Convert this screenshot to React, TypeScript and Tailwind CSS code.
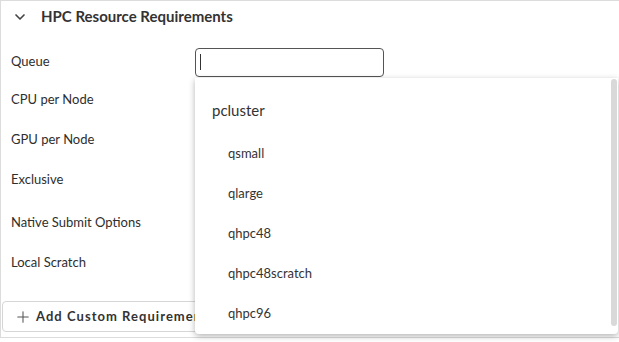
import React from 'react';
import { ChevronDown, Plus } from 'lucide-react';

const queues = ['qsmall', 'qlarge', 'qhpc48', 'qhpc48scratch', 'qhpc96'];

export default function App() {
    return (
        <div className="w-[619px] h-[342px] bg-white overflow-hidden" style={{ fontFamily: 'Lato, "Noto Sans", sans-serif' }}>
            <div className="relative h-[338px] border-l border-t border-b border-[#dcdcdc] text-[#2e2e2e]">
                <div className="flex items-center h-[31px] pl-[11px] gap-[13px]">
                    <ChevronDown size={16} strokeWidth={2.5} className="text-[#444]" />
                    <span className="text-[15px] font-bold text-[#333]">HPC Resource Requirements</span>
                </div>

                <div className="flex flex-col pt-[14px]">
                    <div className="flex items-center h-[32px] pl-[10px]">
                        <span className="w-[184px] text-[13px]">Queue</span>
                        <div className="w-[189px] h-[29px] border border-[#555] rounded-[4px] flex items-center pl-[4px]">
                            <div className="w-px h-[16px] bg-[#333]" />
                        </div>
                    </div>
                    <div className="flex items-center h-[40px] mt-[2px] pl-[10px] text-[13px]">CPU per Node</div>
                    <div className="flex items-center h-[40px] pl-[10px] text-[13px]">GPU per Node</div>
                    <div className="flex items-center h-[40px] pl-[10px] text-[13px]">Exclusive</div>
                    <div className="flex items-center h-[43px] pl-[10px] pt-[3px] text-[13px]">Native Submit Options</div>
                    <div className="flex items-center h-[39px] pl-[10px] text-[13px]">Local Scratch</div>
                </div>

                <div className="mt-[19px] ml-[1px] h-[31px] w-[260px] border border-[#d6d6d6] rounded-[4px] flex items-center pl-[11px] gap-[4px]">
                    <Plus size={18} strokeWidth={1.4} className="text-[#555]" />
                    <span className="text-[13px] font-bold tracking-[0.08em] text-[#333] whitespace-nowrap">Add Custom Requirement</span>
                </div>

                <div className="absolute left-[194px] top-[77px] w-[423px] h-[256px] bg-white rounded-b-[4px] shadow-[0_2px_6px_rgba(0,0,0,0.3)] flex">
                    <div className="flex-1 flex flex-col">
                        <div className="h-[56px] flex items-center pt-[8px] pl-[17px] text-[15px] text-[#333]">pcluster</div>
                        {queues.map((q) => (
                            <div key={q} className="h-[40px] flex items-center pl-[33px] text-[13px] text-[#333]">
                                {q}
                            </div>
                        ))}
                    </div>
                    <div className="w-[6px] mr-[1px] mt-[1px] mb-[8px] rounded-full bg-[#d9d9d9]" />
                </div>
            </div>
        </div>
    );
}
